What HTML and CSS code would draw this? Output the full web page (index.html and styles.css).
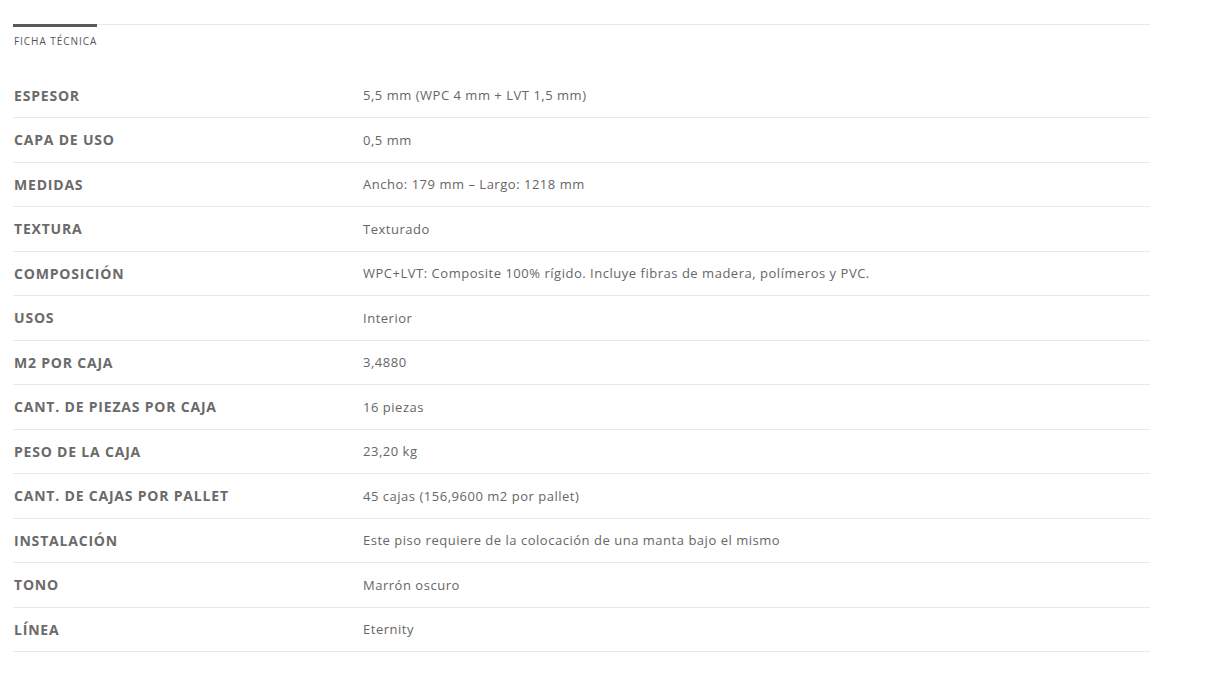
FILE: index.html
```html
<!DOCTYPE html>
<html lang="es">
<head>
<meta charset="utf-8">
<title>Ficha técnica</title>
<link rel="stylesheet" href="styles.css">
</head>
<body>
<div class="wrap">
  <div class="tabs">
    <div class="tab active">FICHA TÉCNICA</div>
  </div>
  <div class="spec">
    <div class="row"><div class="label">ESPESOR</div><div class="value">5,5 mm (WPC 4 mm + LVT 1,5 mm)</div></div>
    <div class="row"><div class="label">CAPA DE USO</div><div class="value">0,5 mm</div></div>
    <div class="row"><div class="label">MEDIDAS</div><div class="value">Ancho: 179 mm – Largo: 1218 mm</div></div>
    <div class="row"><div class="label">TEXTURA</div><div class="value">Texturado</div></div>
    <div class="row"><div class="label">COMPOSICIÓN</div><div class="value">WPC+LVT: Composite 100% rígido. Incluye fibras de madera, polímeros y PVC.</div></div>
    <div class="row"><div class="label">USOS</div><div class="value">Interior</div></div>
    <div class="row"><div class="label">M2 POR CAJA</div><div class="value">3,4880</div></div>
    <div class="row"><div class="label">CANT. DE PIEZAS POR CAJA</div><div class="value">16 piezas</div></div>
    <div class="row"><div class="label">PESO DE LA CAJA</div><div class="value">23,20 kg</div></div>
    <div class="row"><div class="label">CANT. DE CAJAS POR PALLET</div><div class="value">45 cajas (156,9600 m2 por pallet)</div></div>
    <div class="row"><div class="label">INSTALACIÓN</div><div class="value">Este piso requiere de la colocación de una manta bajo el mismo</div></div>
    <div class="row"><div class="label">TONO</div><div class="value">Marrón oscuro</div></div>
    <div class="row"><div class="label">LÍNEA</div><div class="value">Eternity</div></div>
  </div>
</div>
</body>
</html>
```
FILE: styles.css
```css
* { box-sizing: border-box; }
html, body { margin: 0; padding: 0; background: #fff; }
body {
  font-family: "Open Sans", "DejaVu Sans", sans-serif;
  color: #666;
}
.wrap {
  width: 1137px;
  margin-left: 13px;
  padding-top: 24px;
}
.tabs {
  display: flex;
  border-top: 1px solid #e9e9e9;
}
.tab {
  position: relative;
  width: 84px;
  padding-top: 10px;
  padding-left: 1px;
  font-size: 10px;
  color: #555;
  line-height: 12px;
  letter-spacing: 0.95px;
  white-space: nowrap;
}
.tab.active::before {
  content: "";
  position: absolute;
  left: 0;
  right: 0;
  top: -1px;
  height: 3px;
  background: #5a5a5a;
}
.spec {
  margin-top: 26.5px;
}
.row {
  display: grid;
  grid-template-columns: 350px 1fr;
  align-items: center;
  height: 44.5px;
  border-bottom: 1px solid #e9e9e9;
}
.label {
  padding-left: 1px;
  font-size: 14px;
  font-weight: 700;
  color: #6a6a6a;
  letter-spacing: 0.8px;
}
.value {
  font-size: 13px;
  color: #666;
  letter-spacing: 0.52px;
}
```
